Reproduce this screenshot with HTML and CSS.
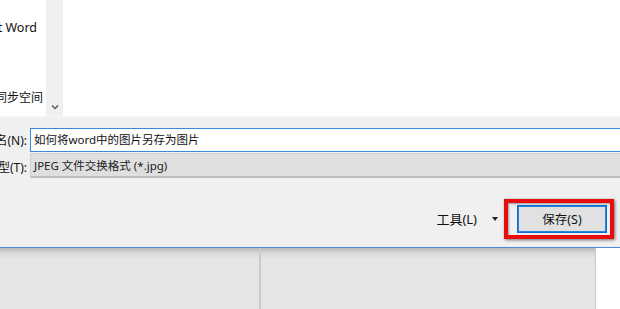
FILE: index.html
```html
<!DOCTYPE html>
<html lang="zh-CN">
<head>
<meta charset="utf-8">
<title>保存</title>
<link rel="stylesheet" href="styles.css">
</head>
<body>
<div class="dialog">
  <div class="top">
    <div class="nav">
      <div class="nav-item nav-word">Microsoft Word</div>
      <div class="nav-item nav-sync">云同步空间</div>
    </div>
    <div class="scroll">
      <svg class="chev" width="8" height="6" viewBox="0 0 8 6"><path d="M1 1.5 L4 4.5 L7 1.5" fill="none" stroke="#555" stroke-width="1.3"/></svg>
    </div>
    <div class="content"></div>
  </div>
  <div class="form">
    <div class="row">
      <div class="label">文件名(N):</div>
      <div class="input">如何将word中的图片另存为图片</div>
    </div>
    <div class="row row-type">
      <div class="label label-type">保存类型(T):</div>
      <div class="select">JPEG 文件交换格式 (*.jpg)</div>
    </div>
  </div>
  <div class="actions">
    <span class="tools">工具(L)</span>
    <span class="caret"></span>
    <div class="save-wrap">
      <button class="save">保存(S)</button>
      <div class="highlight"></div>
    </div>
  </div>
</div>
<div class="below">
  <div class="pane pane-a"></div>
  <div class="pane pane-b"></div>
  <div class="pane pane-c"></div>
</div>
</body>
</html>
```

FILE: styles.css
```css
html, body {
  margin: 0;
  padding: 0;
  width: 620px;
  height: 309px;
  overflow: hidden;
  background: #e5e5e5;
  font-family: "Noto Sans", "Noto Sans CJK SC", sans-serif;
  font-size: 12px;
  color: #111;
}

.dialog {
  background: #f0f0f0;
  border-bottom: 1px solid #4a8ad6;
  height: 247px;
  display: flex;
  flex-direction: column;
}

.top {
  height: 117px;
  display: flex;
  border-bottom: 1px solid #f6f6f6;
  box-sizing: border-box;
}

.nav {
  width: 46px;
  background: #fff;
  display: flex;
  flex-direction: column;
  align-items: flex-end;
}

.nav-item {
  white-space: nowrap;
  line-height: 16px;
}

.nav-word {
  font-size: 12.5px;
  margin-top: 20px;
  margin-right: 9px;
}

.nav-sync {
  margin-top: 54px;
  margin-right: 3px;
}

.scroll {
  width: 17px;
  background: #f0f0f0;
  display: flex;
  align-items: flex-end;
  justify-content: center;
  padding-bottom: 6px;
  box-sizing: border-box;
}

.content {
  flex: 1;
  background: #fff;
}

.form {
  padding-top: 11px;
  display: flex;
  flex-direction: column;
  gap: 1px;
  font-size: 11.5px;
}

.row {
  display: grid;
  grid-template-columns: 30px 1fr;
  align-items: center;
}

.label {
  display: flex;
  justify-content: flex-end;
  white-space: nowrap;
  padding-right: 3px;
  font-size: 12px;
}

.label-type {
  padding-top: 2px;
}

.input {
  height: 24px;
  box-sizing: border-box;
  border: 1px solid #3a8ad9;
  border-right: none;
  background: #fff;
  padding-left: 3px;
  line-height: 21px;
  margin-right: -4px;
}

.select {
  height: 25px;
  box-sizing: border-box;
  background: #dfdfdf;
  border: 1px solid #d2d2d2;
  border-bottom: 2px solid #bcbcbc;
  border-right: none;
  padding-left: 3px;
  line-height: 24px;
  color: #222;
  margin-right: -4px;
}

.actions {
  flex: 1;
  display: flex;
  align-items: center;
  justify-content: flex-end;
  padding: 12px 13px 0 0;
}

.tools {
  font-size: 13px;
  margin-right: 15px;
}

.caret {
  width: 0;
  height: 0;
  border-left: 3.5px solid transparent;
  border-right: 3.5px solid transparent;
  border-top: 4px solid #222;
  margin-right: 19px;
  margin-top: 1px;
}

.save-wrap {
  position: relative;
}

.save {
  width: 90px;
  height: 28px;
  background: #e1e1e1;
  border: 1px solid #0a6fd1;
  box-shadow: inset 0 0 0 1px #2b84da;
  font-family: inherit;
  font-size: 12.5px;
  color: #111;
  padding: 0;
  display: block;
}

.highlight {
  position: absolute;
  left: -13px;
  top: -6px;
  width: 110px;
  height: 40px;
  box-sizing: border-box;
  border: 4px solid #e80c0c;
  box-shadow: 1px 1px 3px rgba(0, 0, 0, 0.55), inset 1px 1px 2px rgba(0, 0, 0, 0.35);
  pointer-events: none;
}

.below {
  height: 61px;
  display: flex;
  background: linear-gradient(#b9b9b9 0, #d9d9d9 5px, #e5e5e5 11px);
}

.pane-a {
  width: 259px;
  border-right: 2px solid #cbcbcb;
}

.pane-b {
  flex: 1;
  border-right: 1px solid #c8c8c8;
}

.pane-c {
  width: 24px;
  background: #fff;
}
```
